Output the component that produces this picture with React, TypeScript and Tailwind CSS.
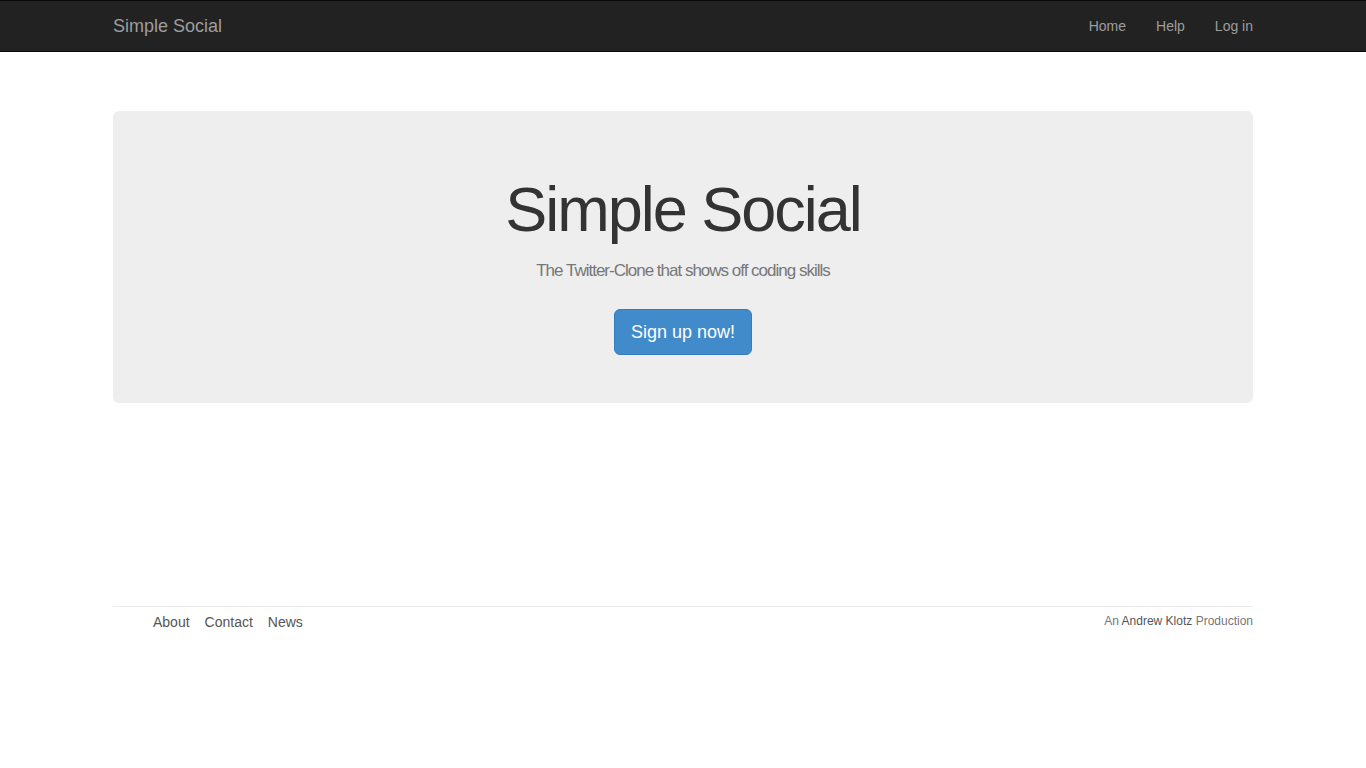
import React from "react";

const App = () => {
  return (
    <div className="min-h-screen bg-white font-['Liberation_Sans',Arial,sans-serif] text-[14px] text-[#333]">
      <header className="bg-[#222] border-y border-[#080808]">
        <div className="mx-auto w-[1140px] h-[50px] flex items-center justify-between">
          <a href="#" className="text-[18px] leading-[20px] text-[#9d9d9d]">
            Simple Social
          </a>
          <nav className="flex -mr-[15px]">
            <a href="#" className="px-[15px] leading-[20px] text-[#9d9d9d]">Home</a>
            <a href="#" className="px-[15px] leading-[20px] text-[#9d9d9d]">Help</a>
            <a href="#" className="px-[15px] leading-[20px] text-[#9d9d9d]">Log in</a>
          </nav>
        </div>
      </header>

      <main className="mx-auto w-[1140px] mt-[59px]">
        <div className="bg-[#eee] rounded-[6px] px-[60px] pt-[67px] pb-[48px] flex flex-col items-center">
          <h1 className="text-[63px] leading-none tracking-[-2px] text-[#333] mb-[21px]">
            Simple Social
          </h1>
          <h2 className="text-[17px] leading-none tracking-[-1px] text-[#777] mb-[30px]">
            The Twitter-Clone that shows off coding skills
          </h2>
          <a
            href="#"
            className="bg-[#428bca] border border-[#357ebd] rounded-[6px] px-[16px] py-[10px] text-[18px] leading-[24px] text-white"
          >
            Sign up now!
          </a>
        </div>
      </main>

      <footer className="mx-auto w-[1140px] mt-[203px] pt-[5px] border-t border-[#eaeaea] flex justify-between items-start">
        <ul className="flex gap-[15px] pl-[40px] leading-[20px] text-[#555]">
          <li><a href="#">About</a></li>
          <li><a href="#">Contact</a></li>
          <li><a href="#">News</a></li>
        </ul>
        <small className="text-[12px] leading-[18px] text-[#777]">
          An <a href="#" className="text-[#555]">Andrew Klotz</a> Production
        </small>
      </footer>
    </div>
  );
};

export default App;
